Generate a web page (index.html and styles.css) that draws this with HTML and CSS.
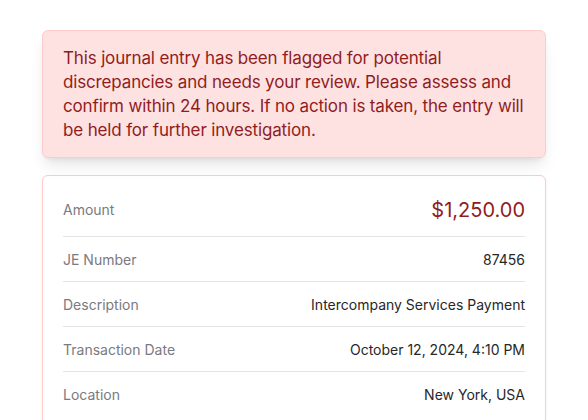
FILE: index.html
```html
<!DOCTYPE html>
<html>
<head>
<meta charset="utf-8">
<link rel="stylesheet" href="styles.css">
</head>
<body>
<div class="wrap">
  <div class="alert">This journal entry has been flagged for potential discrepancies and needs your review. Please assess and confirm within 24 hours. If no action is taken, the entry will be held for further investigation.</div>
  <div class="card">
    <div class="row row-amount"><span class="label">Amount</span><span class="value amount">$1,250.00</span></div>
    <div class="row"><span class="label">JE Number</span><span class="value">87456</span></div>
    <div class="row"><span class="label">Description</span><span class="value">Intercompany Services Payment</span></div>
    <div class="row"><span class="label">Transaction Date</span><span class="value">October 12, 2024, 4:10 PM</span></div>
    <div class="row"><span class="label">Location</span><span class="value">New York, USA</span></div>
  </div>
</div>
</body>
</html>
```
FILE: styles.css
```css
html, body { margin: 0; padding: 0; background: #ffffff; }
body { font-family: Inter, "Noto Sans", sans-serif; overflow: hidden; height: 420px; }
.wrap { width: 504px; margin: 30px auto 0; display: flex; flex-direction: column; gap: 17px; }
.alert {
  position: relative; z-index: 1;
  background: #fee2e2; border: 1px solid #fecaca; border-radius: 6px;
  padding: 15px 20px; color: #8f1d1d; font-size: 17px; line-height: 24px; letter-spacing: -0.15px;
  box-shadow: 0 10px 15px -3px rgba(0,0,0,0.1), 0 4px 6px -4px rgba(0,0,0,0.1);
}
.card {
  background: #fff; border: 1px solid #fecaca; border-radius: 6px;
  padding: 8px 20px; box-shadow: 0 1px 3px rgba(0,0,0,0.06);
}
.row { display: flex; justify-content: space-between; align-items: center; padding: 13px 0 11px; border-bottom: 1px solid #e4e4e7; font-size: 14px; line-height: 20px; }
.row:last-child { border-bottom: none; }
.row-amount { line-height: 28px; padding: 12px 0 12px; }
.label { color: #7a7a80; }
.value { color: #27272a; }
.amount { color: #8f1d1d; font-size: 20px; }
```
